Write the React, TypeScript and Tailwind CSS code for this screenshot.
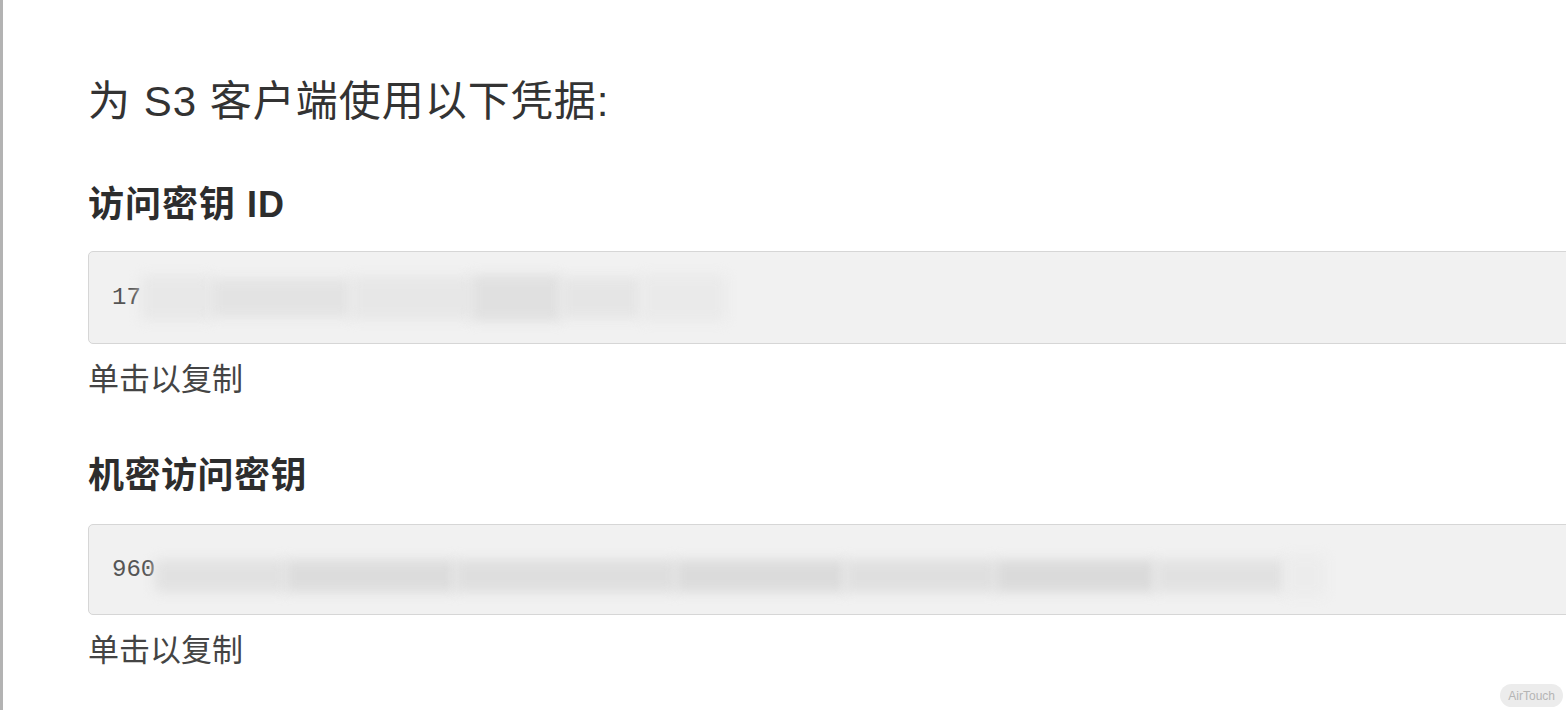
import React from "react";

const cjk = { fontFamily: '"Liberation Sans", "Noto Sans CJK SC", sans-serif' };

function Blur({ w, c, h = 34 }: { w: number; c: string; h?: number }) {
  return (
    <span
      className="inline-block shrink-0 blur-[6px]"
      style={{ width: w, height: h, background: c }}
    />
  );
}

export default function App() {
  return (
    <div className="relative w-full h-[710px] overflow-hidden bg-white border-l-[3px] border-[#b3b3b3]" style={cjk}>
      <div className="flex flex-col pl-[85px] pt-[77px]">
        <h1 className="text-[42px] leading-[50px] tracking-[1px] font-normal text-[#333] whitespace-nowrap">为 S3 客户端使用以下凭据:</h1>

        <h2 className="mt-[56px] text-[36px] leading-[44px] tracking-[1px] font-bold text-[#2d2d2d] whitespace-nowrap">访问密钥 ID</h2>
        <div className="mt-[24px] w-[1520px] h-[93px] rounded-[5px] border border-[#d6d6d6] bg-[#f1f1f1] flex items-center pl-[23px] overflow-hidden">
          <span className="text-[24px] text-[#555]" style={{ fontFamily: '"Liberation Mono", monospace' }}>17</span>
          <div className="flex items-center">
            <Blur w={70} c="#e8e8e8" h={44} />
            <Blur w={140} c="#e3e3e3" h={38} />
            <Blur w={120} c="#e7e7e7" h={42} />
            <Blur w={90} c="#e0e0e0" h={46} />
            <Blur w={80} c="#e5e5e5" h={40} />
            <Blur w={85} c="#eaeaea" h={46} />
          </div>
        </div>
        <p className="mt-[18px] text-[31px] leading-[36px] text-[#444] whitespace-nowrap">单击以复制</p>

        <h2 className="mt-[56px] text-[36px] leading-[44px] tracking-[0.5px] font-bold text-[#2d2d2d] whitespace-nowrap">机密访问密钥</h2>
        <div className="mt-[26px] w-[1520px] h-[91px] rounded-[5px] border border-[#d6d6d6] bg-[#f1f1f1] flex items-center pl-[23px] overflow-hidden">
          <span className="text-[24px] text-[#555]" style={{ fontFamily: '"Liberation Mono", monospace' }}>960</span>
          <div className="flex items-center mt-[12px]">
            <Blur w={130} c="#e1e1e1" h={32} />
            <Blur w={170} c="#dcdcdc" h={32} />
            <Blur w={220} c="#dedede" h={32} />
            <Blur w={170} c="#dbdbdb" h={32} />
            <Blur w={150} c="#dfdfdf" h={32} />
            <Blur w={160} c="#dadada" h={32} />
            <Blur w={130} c="#e1e1e1" h={32} />
            <Blur w={40} c="#ececec" h={40} />
          </div>
        </div>
        <p className="mt-[18px] text-[31px] leading-[36px] text-[#444] whitespace-nowrap">单击以复制</p>
      </div>

      <div className="absolute right-[3px] bottom-[3px] h-[23px] px-[8px] rounded-full bg-[#ececec] flex items-center text-[12px] text-[#b5b5b5]" style={{ fontFamily: '"Liberation Sans", sans-serif' }}>
        AirTouch
      </div>
    </div>
  );
}
